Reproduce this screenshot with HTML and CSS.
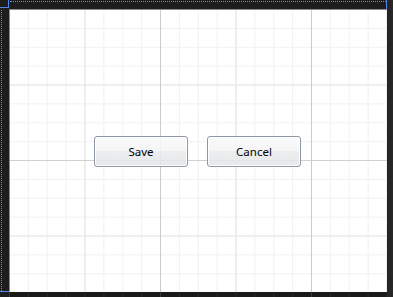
FILE: index.html
```html
<!DOCTYPE html>
<html lang="en">
<head>
<meta charset="UTF-8">
<meta name="viewport" content="width=device-width, initial-scale=1.0">
<title>Window Designer</title>
<link rel="stylesheet" href="styles.css">
</head>
<body>
<div class="designer">
    <div class="corner"></div>
    <div class="ruler-top"><div class="dots-h"></div></div>
    <div class="side-right"></div>

    <div class="ruler-left"><div class="dots-v"></div></div>
    <div class="canvas">
        <button type="button" class="btn">Save</button>
        <button type="button" class="btn">Cancel</button>
    </div>
    <div class="side-right"></div>

    <div class="foot-left"></div>
    <div class="foot"></div>
    <div class="side-right"></div>
</div>
</body>
</html>
```

FILE: styles.css
```css
html, body {
    margin: 0;
    padding: 0;
    background-color: #1d1d1d;
}

.designer {
    display: grid;
    grid-template-columns: 9px 378px 6px;
    grid-template-rows: 9px 283px 5px;
    width: 393px;
    height: 297px;
}

.corner {
    box-sizing: border-box;
    border-right: 1px solid #4f86e8;
    border-bottom: 1px solid #4f86e8;
    width: 9px;
    height: 8px;
}

.ruler-top {
    box-sizing: border-box;
    border-right: 1px solid #4f86e8;
    padding: 1px 0 0 1px;
}

.dots-h {
    border-top: 1px dotted #5b8ff0;
}

.ruler-left {
    box-sizing: border-box;
    border-bottom: 1px solid #4f86e8;
    padding: 1px 0 0 1px;
    display: flex;
}

.dots-v {
    border-left: 1px dotted #5b8ff0;
}

.side-right {
    background-color: #262626;
}

.canvas {
    box-sizing: border-box;
    border-left: 1px solid #8a8a8a;
    border-top: 1px solid #8a8a8a;
    padding-right: 2px;
    display: flex;
    align-items: center;
    justify-content: center;
    gap: 19px;
    background-color: #ffffff;
    background-image:
        linear-gradient(to right, transparent calc(100% - 1px), #cbcbcb calc(100% - 1px)),
        linear-gradient(to bottom, transparent calc(100% - 1px), #d0d0d0 calc(100% - 1px)),
        linear-gradient(to right, transparent calc(100% - 1px), #e4e4e4 calc(100% - 1px)),
        linear-gradient(to bottom, transparent calc(100% - 1px), #e6e6e6 calc(100% - 1px)),
        linear-gradient(to right, transparent calc(100% - 1px), #f1f1f1 calc(100% - 1px)),
        linear-gradient(to bottom, transparent calc(100% - 1px), #f1f1f1 calc(100% - 1px));
    background-size:
        151px 100%,
        100% 151px,
        75.5px 100%,
        100% 75.5px,
        18.875px 100%,
        100% 18.875px;
}

.foot {
    background-color: #1a1a1a;
    background-image:
        linear-gradient(to right, transparent calc(100% - 1px), #3a3a3a calc(100% - 1px)),
        linear-gradient(to right, transparent calc(100% - 1px), #262626 calc(100% - 1px));
    background-size: 151px 100%, 18.875px 100%;
    background-position: 1px 0, 1px 0;
}

.btn {
    box-sizing: border-box;
    width: 94px;
    height: 31px;
    border: 1px solid #8e98a4;
    border-radius: 3px;
    box-shadow: inset 0 0 0 1px rgba(255, 255, 255, 0.9);
    background: linear-gradient(to bottom,
        rgba(250, 250, 250, 0.85) 0%,
        rgba(243, 243, 243, 0.85) 50%,
        rgba(234, 235, 237, 0.85) 50%,
        rgba(226, 228, 231, 0.85) 100%);
    font-family: "Noto Sans", "Open Sans", sans-serif;
    font-size: 11.5px;
    color: #000000;
    padding: 0;
    cursor: pointer;
}
```
